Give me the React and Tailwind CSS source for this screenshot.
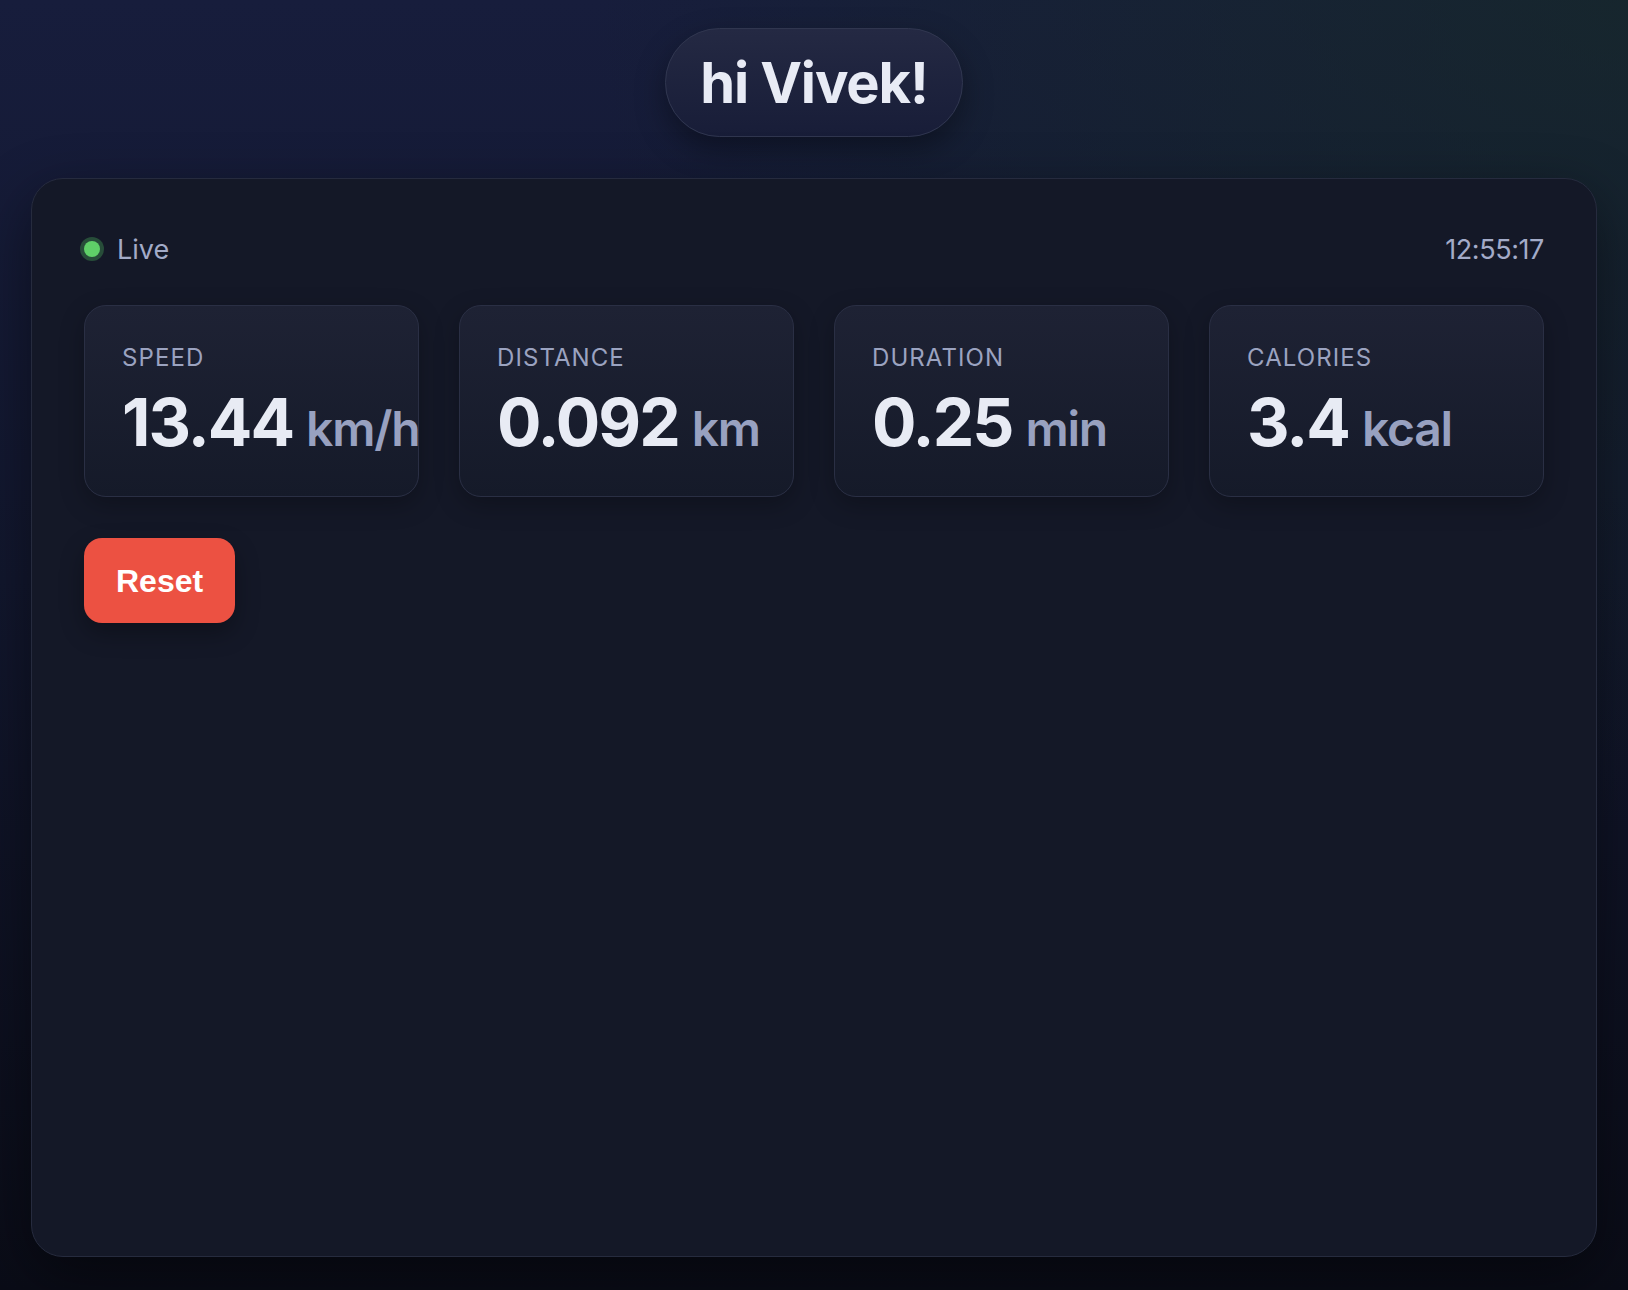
import React from "react";

const stats = [
  { label: "SPEED", value: "13.44", unit: "km/h" },
  { label: "DISTANCE", value: "0.092", unit: "km" },
  { label: "DURATION", value: "0.25", unit: "min" },
  { label: "CALORIES", value: "3.4", unit: "kcal" },
];

function StatCard({ label, value, unit }) {
  return (
    <div className="h-[192px] rounded-[22px] border border-[#2a2f44] bg-gradient-to-b from-[#1e2234] to-[#151a29] pl-[37px] pt-[37px] shadow-[0_8px_24px_rgba(0,0,0,0.25)]">
      <div className="text-[24px] leading-[29px] tracking-[0.045em] text-[#9ba3c0]">{label}</div>
      <div className="mt-[17px] flex items-baseline whitespace-nowrap">
        <span className="text-[66px] font-bold leading-none tracking-[-0.03em] text-[#e8ebf4]">{value}</span>
        <span className="ml-[13px] text-[48px] font-semibold leading-none tracking-[-0.025em] text-[#98a1c0]">{unit}</span>
      </div>
    </div>
  );
}

export default function App() {
  return (
    <div className="min-h-screen w-full bg-[radial-gradient(ellipse_at_top_right,rgba(22,44,36,0.6),transparent_45%),linear-gradient(180deg,#171d3c_0%,#12172e_45%,#0a0c17_100%)] px-[31px] pt-[28px] pb-[33px] font-['Inter','Noto_Sans',sans-serif]">
      <div className="flex flex-col items-center">
        <div className="flex h-[109px] items-center rounded-full border border-[#30364f] bg-gradient-to-b from-[#242943] to-[#181d38] px-[34px] shadow-[0_12px_30px_rgba(0,0,0,0.35)]">
          <span className="text-[56px] font-bold leading-none tracking-[-0.02em] text-[#e8ebf5]">hi Vivek!</span>
        </div>
        <div className="mt-[41px] h-[1079px] w-full rounded-[32px] border border-[#262b3e] bg-[#141827] px-[52px] pt-[54px] shadow-[0_20px_60px_rgba(0,0,0,0.45)]">
          <div className="flex h-[32px] items-center justify-between">
            <div className="flex items-center">
              <span className="h-4 w-4 rounded-full bg-[#5fd068] shadow-[0_0_0_4px_rgba(80,190,95,0.32)]"></span>
              <span className="ml-[17px] text-[27px] leading-none text-[#a3abc8]">Live</span>
            </div>
            <span className="text-[27px] leading-none tracking-[-0.015em] text-[#a3abc8]">12:55:17</span>
          </div>
          <div className="mt-[40px] grid grid-cols-4 gap-[40px]">
            {stats.map((s) => (
              <StatCard key={s.label} {...s} />
            ))}
          </div>
          <button className="mt-[41px] flex h-[85px] items-center rounded-[18px] bg-[#ec5142] px-[32px] font-['Liberation_Sans','Arial',sans-serif] text-[32px] font-bold text-white shadow-[0_10px_24px_rgba(0,0,0,0.3)]">
            Reset
          </button>
        </div>
      </div>
    </div>
  );
}
